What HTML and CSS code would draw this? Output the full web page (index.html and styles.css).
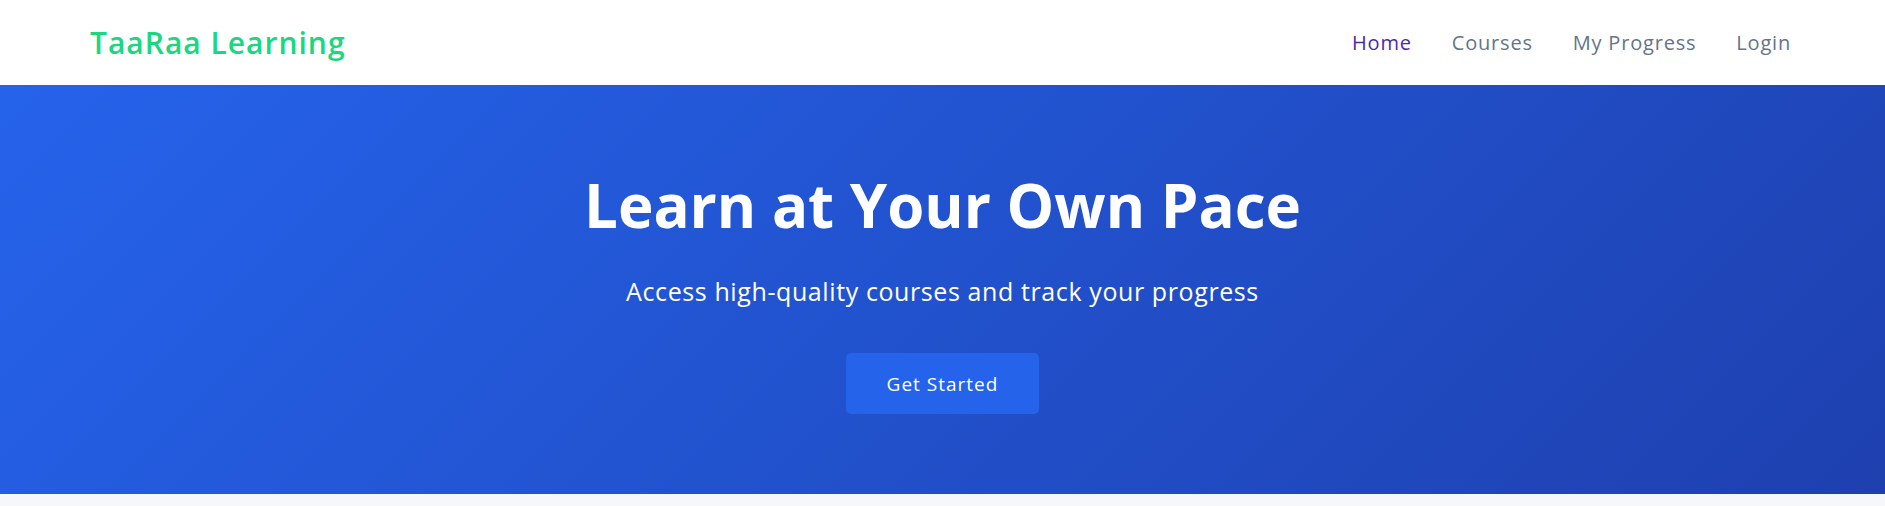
FILE: index.html
```html
<!DOCTYPE html>
<html lang="en">
<head>
<meta charset="utf-8">
<title>TaaRaa Learning</title>
<link rel="stylesheet" href="styles.css">
</head>
<body>
<header class="site-header">
  <div class="logo">TaaRaa Learning</div>
  <nav class="nav">
    <a class="nav-link active" href="#">Home</a>
    <a class="nav-link" href="#">Courses</a>
    <a class="nav-link" href="#">My Progress</a>
    <a class="nav-link" href="#">Login</a>
  </nav>
</header>
<section class="hero">
  <h1 class="hero-title">Learn at Your Own Pace</h1>
  <p class="hero-sub">Access high-quality courses and track your progress</p>
  <a class="btn" href="#">Get Started</a>
</section>
<main class="content"></main>
</body>
</html>
```

FILE: styles.css
```css
* { box-sizing: border-box; }
html, body { margin: 0; padding: 0; }
body {
  font-family: "Open Sans", "Noto Sans", sans-serif;
  background: #f5f7fb;
  color: #1e293b;
}
.site-header {
  height: 85px;
  background: #ffffff;
  display: flex;
  align-items: center;
  justify-content: space-between;
  padding: 0 94px 0 90px;
}
.logo {
  font-size: 30px;
  font-weight: 600;
  color: #18d880;
  letter-spacing: 1px;
}
.nav {
  display: flex;
  gap: 40px;
}
.nav-link {
  font-size: 20px;
  letter-spacing: 0.8px;
  color: #64748b;
  text-decoration: none;
}
.nav-link.active { color: #4b2ca8; }
.hero {
  height: 409px;
  background: linear-gradient(135deg, #2563eb 0%, #1e40af 100%);
  color: #ffffff;
  text-align: center;
  display: flex;
  flex-direction: column;
  align-items: center;
  padding-top: 84px;
}
.hero-title {
  margin: 0;
  font-size: 60px;
  font-weight: 700;
  line-height: 72px;
}
.hero-sub {
  margin: 33px 0 0;
  font-size: 25px;
  letter-spacing: 0.6px;
  line-height: 34px;
}
.btn {
  margin-top: 45px;
  width: 193px;
  height: 61px;
  display: flex;
  align-items: center;
  justify-content: center;
  background: #2563eb;
  color: #ffffff;
  border-radius: 5px;
  font-size: 19px;
  letter-spacing: 1px;
  text-decoration: none;
}
.content { height: 12px; }
```
